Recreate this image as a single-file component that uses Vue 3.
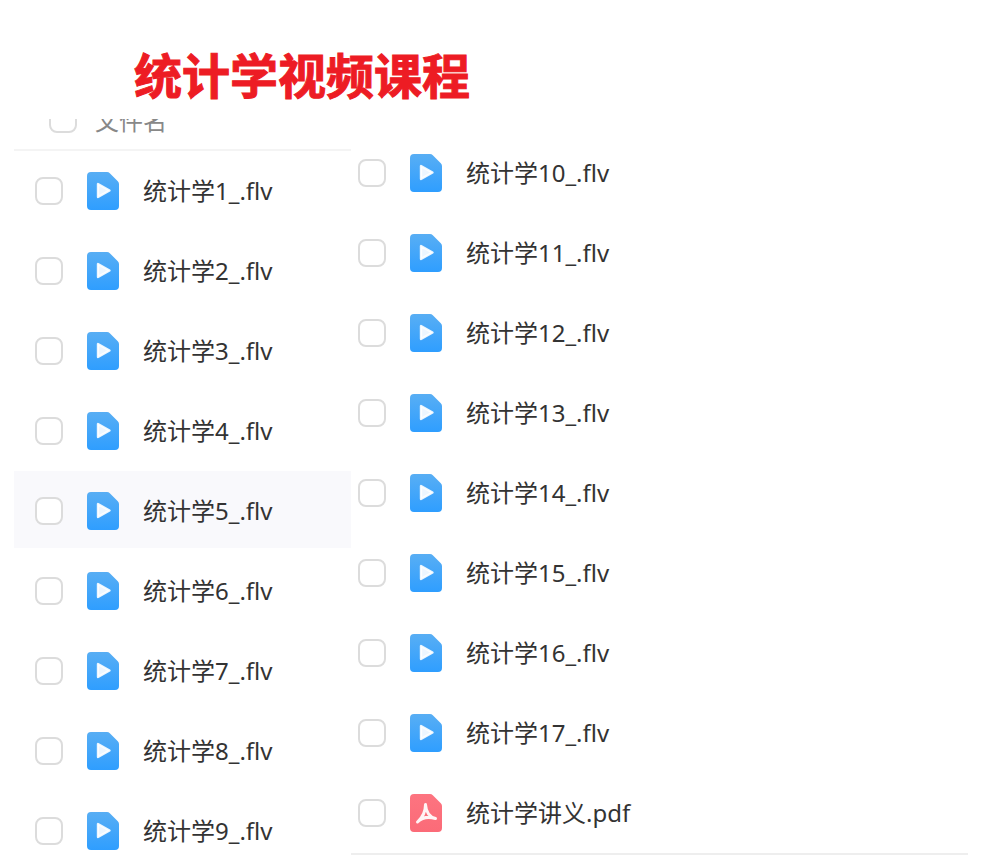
<template>
  <div class="page">
    <h1 class="title">统计学视频课程</h1>
    <div class="columns">
      <section class="col-left">
        <div class="list-head">
          <div class="head-inner">
            <span class="check"></span>
            <span class="head-label">文件名</span>
          </div>
        </div>
        <div
          v-for="(file, idx) in leftFiles"
          :key="file.name"
          :class="['row', { hovered: idx === 4 }]"
        >
          <span class="check"></span>
          <svg class="file-icon" viewBox="0 0 32 38" width="32" height="38">
            <path fill="url(#videoFill)" d="M4 0H20a4 4 0 0 1 2.8 1.2L30.8 9.2a4 4 0 0 1 1.2 2.8V34a4 4 0 0 1-4 4H4a4 4 0 0 1-4-4V4a4 4 0 0 1 4-4z" />
            <path fill="#fff" fill-opacity=".9" stroke="#fff" stroke-opacity=".9" stroke-width="2.4" stroke-linejoin="round" d="M11 12V25L22.5 18.5z" />
          </svg>
          <span class="file-name">{{ file.name }}</span>
        </div>
      </section>
      <section class="col-right">
        <div v-for="file in rightFiles" :key="file.name" class="row">
          <span class="check"></span>
          <svg v-if="file.type === 'video'" class="file-icon" viewBox="0 0 32 38" width="32" height="38">
            <path fill="url(#videoFill)" d="M4 0H20a4 4 0 0 1 2.8 1.2L30.8 9.2a4 4 0 0 1 1.2 2.8V34a4 4 0 0 1-4 4H4a4 4 0 0 1-4-4V4a4 4 0 0 1 4-4z" />
            <path fill="#fff" fill-opacity=".9" stroke="#fff" stroke-opacity=".9" stroke-width="2.4" stroke-linejoin="round" d="M11 12V25L22.5 18.5z" />
          </svg>
          <svg v-else class="file-icon" viewBox="0 0 32 38" width="32" height="38">
            <path fill="url(#pdfFill)" d="M4 0H20a4 4 0 0 1 2.8 1.2L30.8 9.2a4 4 0 0 1 1.2 2.8V34a4 4 0 0 1-4 4H4a4 4 0 0 1-4-4V4a4 4 0 0 1 4-4z" />
            <path fill="none" stroke="#fff" stroke-opacity=".92" stroke-width="3" stroke-linecap="round" d="M15.5 10.5C15.5 17 12 24 7.5 28M25.5 24.5C20 23 16 18 15.5 10.5M7.5 28C12 23.5 19 22.5 25.5 24.5" />
          </svg>
          <span class="file-name">{{ file.name }}</span>
        </div>
      </section>
    </div>
    <svg class="defs" width="0" height="0">
      <defs>
        <linearGradient id="videoFill" x1="0" y1="0" x2="0" y2="1">
          <stop offset="0" stop-color="#58aef4" />
          <stop offset="1" stop-color="#2f9eff" />
        </linearGradient>
        <linearGradient id="pdfFill" x1="0" y1="0" x2="0" y2="1">
          <stop offset="0" stop-color="#fd7480" />
          <stop offset="1" stop-color="#fb6b78" />
        </linearGradient>
      </defs>
    </svg>
  </div>
</template>

<script setup>
const leftFiles = Array.from({ length: 9 }, (_, i) => ({ name: `统计学${i + 1}_.flv` }))

const rightFiles = [
  ...Array.from({ length: 8 }, (_, i) => ({ name: `统计学${i + 10}_.flv`, type: 'video' })),
  { name: '统计学讲义.pdf', type: 'pdf' },
]
</script>

<style scoped>
.page {
  position: relative;
  width: 986px;
  height: 858px;
  overflow: hidden;
  background: #fff;
  font-family: "Noto Sans", "Noto Sans CJK SC", sans-serif;
  color: #333;
}
.title {
  margin: 0;
  height: 119px;
  padding: 43px 0 0 134px;
  box-sizing: border-box;
  font-size: 48px;
  line-height: 60px;
  font-weight: 700;
  color: #ed1c24;
  font-family: "Noto Sans CJK SC", sans-serif;
  -webkit-text-stroke: 1px #ed1c24;
}
.columns {
  display: flex;
  align-items: flex-start;
}
.col-left {
  width: 337px;
  margin-left: 14px;
  flex: none;
}
/* table head scrolled away under the title, only its lower part shows */
.list-head {
  height: 32px;
  border-bottom: 2px solid #f4f4f4;
  box-sizing: border-box;
  overflow: hidden;
  display: flex;
  align-items: flex-end;
  padding-bottom: 16px;
}
.head-inner {
  display: flex;
  align-items: center;
  padding-left: 35px;
  height: 28px;
  flex: none;
}
.head-label {
  margin-left: 18px;
  padding-top: 4px;
  font-size: 24px;
  line-height: 32px;
  color: #888;
}
.col-right {
  width: 617px;
  margin-top: 14px;
  padding-bottom: 3px;
  border-bottom: 2px solid #eee;
}
.row {
  display: flex;
  align-items: center;
  height: 77px;
  margin-bottom: 3px;
  padding-top: 3px;
  box-sizing: border-box;
  padding-left: 21px;
}
.col-right .row {
  padding-left: 7px;
}
.col-right .row:last-child {
  margin-bottom: 0;
}
.row.hovered {
  background: #f9f9fc;
}
.check {
  display: block;
  width: 28px;
  height: 28px;
  flex: none;
  box-sizing: border-box;
  border: 2px solid #dcdcdc;
  border-radius: 8px;
  background: #fff;
}
.file-icon {
  flex: none;
  margin-left: 24px;
}
.file-name {
  margin-left: 24px;
  font-size: 24px;
  line-height: 32px;
  white-space: nowrap;
  color: #333;
}
.defs {
  position: absolute;
}
</style>
